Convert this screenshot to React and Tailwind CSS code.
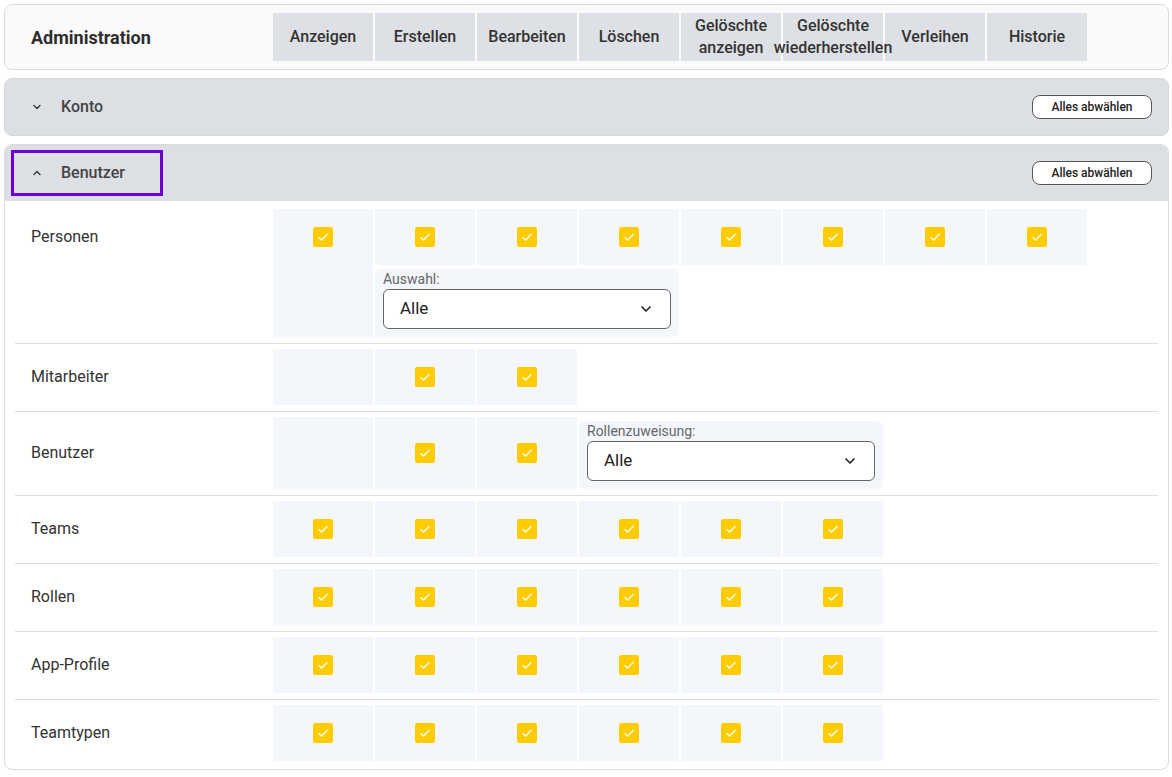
import { ChevronDown, ChevronUp } from "lucide-react";

const columns = [
  ["Anzeigen"],
  ["Erstellen"],
  ["Bearbeiten"],
  ["Löschen"],
  ["Gelöschte", "anzeigen"],
  ["Gelöschte", "wiederherstellen"],
  ["Verleihen"],
  ["Historie"],
];

const Check = () => (
  <div className="w-5 h-5 rounded-[2px] bg-[#ffcc00] flex items-center justify-center">
    <svg width="12" height="10" viewBox="0 0 12 10" fill="none">
      <path d="M1.5 5.2 L4.6 8 L10.5 2" stroke="white" strokeWidth="1.4" />
    </svg>
  </div>
);

const Cell = ({ checked, className = "" }) => (
  <div
    className={`min-h-[56px] bg-[#f3f6fb] flex items-center justify-center ${className}`}
  >
    {checked && <Check />}
  </div>
);

const SelectBlock = ({ label, className = "" }) => (
  <div className={`col-span-3 bg-[#f3f6fb] rounded-md px-2 pt-[2px] pb-2 ${className}`}>
    <div className="text-[14px] leading-4 text-[#666]">{label}</div>
    <div className="mt-[2px] h-10 bg-white border border-[#666] rounded-md flex items-center justify-between pl-4 pr-4">
      <span className="text-[17px] text-[#222]">Alle</span>
      <ChevronDown size={16} strokeWidth={2.5} className="text-[#222]" />
    </div>
  </div>
);

const Row = ({ label, last, labelTop, children }) => (
  <div className={`flex pt-[5px] pb-[6px] ${last ? "" : "border-b border-[#dddddd]"}`}>
    <div
      className={`w-[258px] pl-4 flex items-center text-[16px] text-[#333] ${
        labelTop ? "h-[56px]" : ""
      }`}
    >
      {label}
    </div>
    {children}
  </div>
);

const AllesButton = () => (
  <button className="h-6 w-[120px] rounded-lg border border-[#555] bg-white text-[12px] font-medium text-[#222]">
    Alles abwählen
  </button>
);

const fullRows = ["Teams", "Rollen", "App-Profile", "Teamtypen"];

export default function App() {
  return (
    <div className="min-h-screen bg-white p-1 pr-[3px] font-['Roboto',sans-serif]">
      {/* Header */}
      <div className="h-[66px] flex items-center border border-[#dcdcdc] rounded-lg bg-[#fafafa]">
        <div className="w-[268px] pl-[26px] text-[18px] font-bold text-[#2d2d2d]">
          Administration
        </div>
        <div className="flex gap-[2px]">
          {columns.map((c, i) => (
            <div
              key={i}
              className="w-[100px] h-12 bg-[#dde0e4] flex items-center justify-center"
            >
              <span className="relative z-10 text-center text-[16px] leading-[22px] font-medium text-[#333] whitespace-nowrap">
                {c[0]}
                {c[1] && <br />}
                {c[1]}
              </span>
            </div>
          ))}
        </div>
      </div>

      {/* Konto */}
      <div className="mt-2 h-[58px] flex items-center justify-between rounded-lg bg-[#dcdfe3] border border-[#d5d8dc] pl-[26px] pr-4">
        <div className="flex items-center">
          <ChevronDown size={12} strokeWidth={2.5} className="text-[#333]" />
          <span className="ml-[18px] text-[16px] font-medium text-[#444]">Konto</span>
        </div>
        <AllesButton />
      </div>

      {/* Benutzer */}
      <div className="mt-2 border border-[#dcdcdc] rounded-lg overflow-hidden">
        <div className="h-[56px] flex items-center justify-between bg-[#dcdfe3] pl-[6px] pr-4">
          <div className="w-[152px] h-[46px] border-[3px] border-[#6a00d4] flex items-center pl-[17px]">
            <ChevronUp size={12} strokeWidth={2.5} className="text-[#333]" />
            <span className="ml-[18px] text-[16px] font-medium text-[#444]">Benutzer</span>
          </div>
          <AllesButton />
        </div>

        <div className="px-[10px] pt-[3px] pb-[2px]">
          <Row label="Personen" labelTop>
            <div className="grid grid-cols-[repeat(8,100px)] gap-x-[2px] gap-y-1">
              <Cell checked className="row-span-2 !items-start pt-[18px]" />
              {[...Array(7)].map((_, i) => (
                <Cell key={i} checked />
              ))}
              <SelectBlock label="Auswahl:" />
            </div>
          </Row>

          <Row label="Mitarbeiter">
            <div className="grid grid-cols-[repeat(8,100px)] gap-[2px]">
              <Cell />
              <Cell checked />
              <Cell checked />
            </div>
          </Row>

          <Row label="Benutzer">
            <div className="grid grid-cols-[repeat(8,100px)] gap-[2px]">
              <Cell />
              <Cell checked />
              <Cell checked />
              <SelectBlock label="Rollenzuweisung:" className="mt-1" />
            </div>
          </Row>

          {fullRows.map((r, idx) => (
            <Row key={r} label={r} last={idx === fullRows.length - 1}>
              <div className="grid grid-cols-[repeat(8,100px)] gap-[2px]">
                {[...Array(6)].map((_, i) => (
                  <Cell key={i} checked />
                ))}
              </div>
            </Row>
          ))}
        </div>
      </div>
    </div>
  );
}
